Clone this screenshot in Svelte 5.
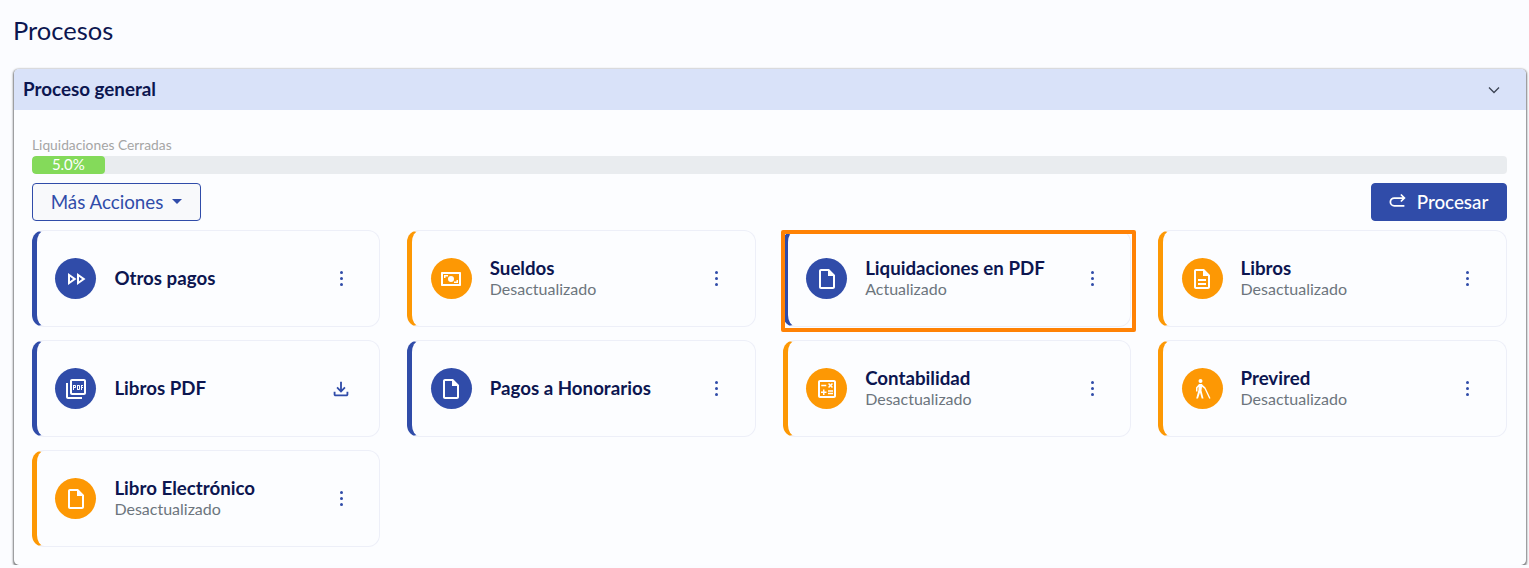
<script>
  const filePath = 'M14 2H6c-1.1 0-1.99.9-1.99 2L4 20c0 1.1.89 2 1.99 2H18c1.1 0 2-.9 2-2V8l-6-6zM6 20V4h7v5h5v11H6z';
  const icons = {
    forward: 'M15 9.86L18.03 12 15 14.14V9.86m-9 0L9.03 12 6 14.14V9.86M13 6v12l8.5-6L13 6zM4 6v12l8.5-6L4 6z',
    file: filePath,
    article: 'M8 16h8v2H8zm0-4h8v2H8zm6-10H6c-1.1 0-2 .9-2 2v16c0 1.1.89 2 1.99 2H18c1.1 0 2-.9 2-2V8l-6-6zm4 18H6V4h7v5h5v11z',
    pdf: 'M20 2H8c-1.1 0-2 .9-2 2v12c0 1.1.9 2 2 2h12c1.1 0 2-.9 2-2V4c0-1.1-.9-2-2-2zm0 14H8V4h12v12zM4 6H2v14c0 1.1.9 2 2 2h14v-2H4V6zm12 6V9c0-.55-.45-1-1-1h-2v5h2c.55 0 1-.45 1-1zm-2-3h1v3h-1V9zm4 2h1v-1h-1V9h1V8h-2v5h1v-2zm-8 0h1c.55 0 1-.45 1-1V9c0-.55-.45-1-1-1H9v5h1v-2zm0-2h1v1h-1V9z',
    money: 'M21 5H3c-.55 0-1 .45-1 1v12c0 .55.45 1 1 1h18c.55 0 1-.45 1-1V6c0-.55-.45-1-1-1zm-1 12H4V7h16v10zM12 9a3 3 0 1 0 0 6 3 3 0 0 0 0-6zM5 8h4v1.5H6.500V11H5V8zm14 8h-4v-1.500h2.500V13H19v3z',
    calc: 'M19 3H5c-1.100 0-2 .9-2 2v14c0 1.100.9 2 2 2h14c1.100 0 2-.9 2-2V5c0-1.100-.9-2-2-2zm0 16H5V5h14v14zM6.250 7.720h5v1.500h-5zM13 15.750h5v1.500h-5zM13 13.250h5v1.500h-5zM8 18h1.500v-2h2v-1.500h-2v-2H8v2H6V16h2zM14.090 10.950l1.410-1.410 1.410 1.410 1.060-1.060-1.410-1.420 1.410-1.410L16.910 6 15.500 7.410 14.090 6l-1.060 1.060 1.410 1.410-1.410 1.420z',
    walker: 'M10.500 2a2 2 0 1 1 0 4 2 2 0 0 1 0-4zM9 7h3l.6 1 2.900 2.600-1 1.100-2.500-2L11.500 13.500l2 8h-1.800L10 15.500 8 21.500H6.200L8.500 13V9.800L7.500 11v3.500H6V10.500zM14.300 11.300l1.200-.6 5 10.500-1.200.6z',
  };

  const cards = [
    { title: 'Otros pagos', icon: 'forward', tone: 'blue' },
    { title: 'Sueldos', status: 'Desactualizado', icon: 'money', tone: 'orange' },
    { title: 'Liquidaciones en PDF', status: 'Actualizado', icon: 'file', tone: 'blue', marked: true },
    { title: 'Libros', status: 'Desactualizado', icon: 'article', tone: 'orange' },
    { title: 'Libros PDF', icon: 'pdf', tone: 'blue', download: true },
    { title: 'Pagos a Honorarios', icon: 'file', tone: 'blue' },
    { title: 'Contabilidad', status: 'Desactualizado', icon: 'calc', tone: 'orange' },
    { title: 'Previred', status: 'Desactualizado', icon: 'walker', tone: 'orange' },
    { title: 'Libro Electrónico', status: 'Desactualizado', icon: 'file', tone: 'orange' },
  ];
</script>

<main>
  <h1>Procesos</h1>
  <section class="panel">
    <header>
      <h2>Proceso general</h2>
      <svg class="chevron" viewBox="0 0 12 8" width="12" height="8"><path d="M1 1.500l5 5 5-5" /></svg>
    </header>
    <div class="body">
      <div class="progress-label">Liquidaciones Cerradas</div>
      <div class="track"><div class="fill">5.0%</div></div>
      <div class="actions">
        <button class="outline">Más Acciones <span class="caret"></span></button>
        <button class="solid">
          <svg viewBox="0 0 24 24" width="21" height="21"><path d="M21 8H9.500a4.500 4.500 0 0 0 0 9H21M17 4l4 4-4 4" /></svg>
          Procesar
        </button>
      </div>
      <div class="grid">
        {#each cards as card (card.title)}
          <article class={['card', card.tone]}>
            <div class="circle">
              <svg viewBox="0 0 24 24" width="24" height="24"><path d={icons[card.icon]} /></svg>
            </div>
            <div class="text">
              <div class="title">{card.title}</div>
              {#if card.status}<div class="status">{card.status}</div>{/if}
            </div>
            {#if card.download}
              <svg class="download" viewBox="0 0 24 24" width="22" height="22"><path d="M18 15v3H6v-3H4v3c0 1.100.9 2 2 2h12c1.100 0 2-.9 2-2v-3h-2zm-1-4l-1.410-1.410L13 12.170V4h-2v8.170L8.410 9.590 7 11l5 5 5-5z" /></svg>
            {:else}
              <div class="kebab"><i></i><i></i><i></i></div>
            {/if}
            {#if card.marked}<div class="mark"></div>{/if}
          </article>
        {/each}
      </div>
    </div>
  </section>
</main>

<style>
  :global(body) {
    margin: 0;
    background: #fbfcff;
    font-family: Lato, "Noto Sans", sans-serif;
    overflow: hidden;
  }

  main {
    padding: 15px 3.5px 0 14px;
  }

  h1 {
    margin: 0 0 23px -1px;
    font-size: 25.500px;
    line-height: 31px;
    font-weight: 400;
    color: #0c1650;
  }

  .panel {
    border-radius: 5px;
    box-shadow: 0 1px 2px 0.5px rgba(0, 0, 0, 0.5);
    background: #fcfdff;
    height: 496px;
    overflow: hidden;
  }

  header {
    height: 41px;
    background: #d9e2f9;
    display: flex;
    align-items: center;
    justify-content: space-between;
    padding: 0 26px 0 9px;
  }

  h2 {
    margin: 0 0 2px;
    font-size: 18.800px;
    font-weight: 700;
    color: #0c1650;
  }

  .chevron path {
    fill: none;
    stroke: #3d4454;
    stroke-width: 1.300;
  }

  .body {
    padding: 27px 19px 0 18px;
  }

  .progress-label {
    font-size: 13.800px;
    line-height: 16px;
    color: #a5a5a5;
    height: 19px;
  }

  .track {
    height: 18px;
    background: #e9ecef;
    border-radius: 4px;
    overflow: hidden;
  }

  .fill {
    width: calc(5% - 1px);
    height: 100%;
    background: #84da5a;
    border-radius: 4px;
    color: #fff;
    font-size: 15px;
    line-height: 17px;
    text-align: center;
  }

  .actions {
    display: flex;
    justify-content: space-between;
    margin: 9px 0;
  }

  button {
    height: 38px;
    border-radius: 4px;
    font-family: inherit;
    font-size: 18.800px;
    display: flex;
    align-items: center;
    padding: 0 0 2px;
  }

  .outline {
    width: 169px;
    justify-content: center;
    gap: 9px;
    background: #f8f9fb;
    border: 1px solid #304ca9;
    color: #304ca9;
  }

  .caret {
    border-left: 5px solid transparent;
    border-right: 5px solid transparent;
    border-top: 5px solid #304ca9;
  }

  .solid {
    width: 136px;
    justify-content: center;
    gap: 10px;
    padding-right: 3px;
    background: #304ca9;
    border: 1px solid #304ca9;
    color: #fff;
    font-weight: 500;
  }

  .solid path {
    fill: none;
    stroke: #fff;
    stroke-width: 2;
  }

  .grid {
    display: grid;
    grid-template-columns: repeat(4, 1fr);
    gap: 13px 27px;
  }

  .card {
    position: relative;
    height: 97px;
    box-sizing: border-box;
    display: flex;
    align-items: center;
    padding: 0 28px 0 18.400px;
    background: #fcfdff;
    border: 1px solid #edeff8;
    border-left: 5px solid #304ca9;
    border-radius: 12px;
  }

  .card.orange {
    border-left-color: #fd9804;
  }

  .circle {
    width: 41px;
    height: 41px;
    border-radius: 50%;
    background: #304ca9;
    display: flex;
    align-items: center;
    justify-content: center;
    flex: none;
  }

  .orange .circle {
    background: #fd9804;
  }

  .circle path {
    fill: #fff;
  }

  .text {
    flex: 1;
    margin-left: 18px;
    margin-top: -1px;
  }

  .title {
    font-size: 18.700px;
    line-height: 22px;
    font-weight: 700;
    color: #0c1650;
  }

  .status {
    font-size: 16px;
    line-height: 20px;
    color: #6c757d;
  }

  .kebab {
    width: 20px;
    display: flex;
    flex-direction: column;
    align-items: center;
    gap: 3px;
  }

  .kebab i {
    width: 3px;
    height: 3px;
    border-radius: 50%;
    background: #304ca9;
  }

  .download {
    margin-right: -1px;
  }

  .download path {
    fill: #304ca9;
  }

  .mark {
    position: absolute;
    left: -7px;
    top: -1px;
    width: 355px;
    height: 102px;
    box-sizing: border-box;
    border: 4px solid #ff8205;
    border-radius: 2px;
  }
</style>
